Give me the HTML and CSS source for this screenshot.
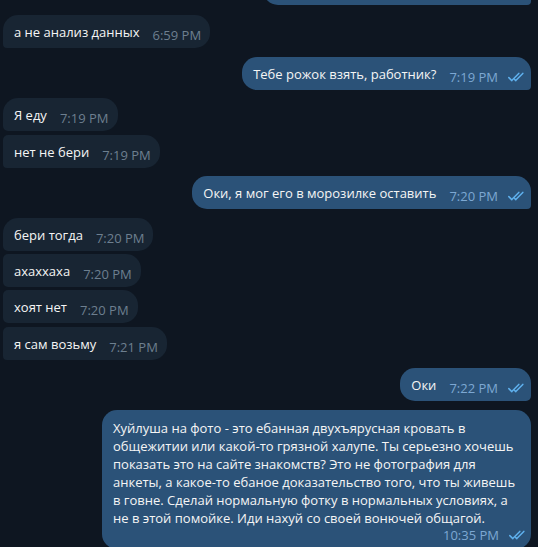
FILE: index.html
```html
<!DOCTYPE html>
<html lang="ru">
<head>
<meta charset="utf-8">
<link rel="stylesheet" href="styles.css">
</head>
<body>
<div class="chat">
  <div class="row out first"><div class="bubble out stub"></div></div>

  <div class="row in grp"><div class="bubble in"><span class="text">а не анализ данных</span><span class="meta">6:59 PM</span></div></div>

  <div class="row out grp"><div class="bubble out"><span class="text">Тебе рожок взять, работник?</span><span class="meta">7:19 PM<svg class="checks" viewBox="0 0 17 10"><path d="M0.8 5.6 L3.8 8.6 L10.8 1.4 M6.8 7.6 L7.8 8.6 L14.8 1.4"/></svg></span></div></div>

  <div class="row in grp"><div class="bubble in top"><span class="text">Я еду</span><span class="meta">7:19 PM</span></div></div>
  <div class="row in"><div class="bubble in bottom"><span class="text">нет не бери</span><span class="meta">7:19 PM</span></div></div>

  <div class="row out grp"><div class="bubble out"><span class="text">Оки, я мог его в морозилке оставить</span><span class="meta">7:20 PM<svg class="checks" viewBox="0 0 17 10"><path d="M0.8 5.6 L3.8 8.6 L10.8 1.4 M6.8 7.6 L7.8 8.6 L14.8 1.4"/></svg></span></div></div>

  <div class="row in grp"><div class="bubble in top"><span class="text">бери тогда</span><span class="meta">7:20 PM</span></div></div>
  <div class="row in"><div class="bubble in middle"><span class="text">ахаххаха</span><span class="meta">7:20 PM</span></div></div>
  <div class="row in"><div class="bubble in middle"><span class="text">хоят нет</span><span class="meta">7:20 PM</span></div></div>
  <div class="row in"><div class="bubble in bottom"><span class="text">я сам возьму</span><span class="meta">7:21 PM</span></div></div>

  <div class="row out grp"><div class="bubble out top"><span class="text">Оки</span><span class="meta">7:22 PM<svg class="checks" viewBox="0 0 17 10"><path d="M0.8 5.6 L3.8 8.6 L10.8 1.4 M6.8 7.6 L7.8 8.6 L14.8 1.4"/></svg></span></div></div>

  <div class="row out grp"><div class="bubble out long"><p class="text">Хуйлуша на фото - это ебанная двухъярусная кровать в общежитии или какой-то грязной халупе. Ты серьезно хочешь показать это на сайте знакомств? Это не фотография для анкеты, а какое-то ебаное доказательство того, что ты живешь в говне. Сделай нормальную фотку в нормальных условиях, а не в этой помойке. Иди нахуй со своей вонючей общагой.</p><div class="meta block">10:35 PM<svg class="checks" viewBox="0 0 17 10"><path d="M0.8 5.6 L3.8 8.6 L10.8 1.4 M6.8 7.6 L7.8 8.6 L14.8 1.4"/></svg></div></div></div>
</div>
</body>
</html>
```

FILE: styles.css
```css
html, body {
  margin: 0;
  padding: 0;
  background: #0e1621;
  height: 100%;
  overflow: hidden;
}

body {
  font-family: "Open Sans", "Liberation Sans", sans-serif;
  font-size: 13px;
  color: #f5f5f5;
}

.chat {
  display: flex;
  flex-direction: column;
}

.row {
  display: flex;
  margin-top: 3.25px;
}

.row.grp {
  margin-top: 8.7px;
}

.row.first {
  margin-top: -28px;
  margin-bottom: 1.3px;
}

.row.in {
  justify-content: flex-start;
  padding-left: 3px;
}

.row.out {
  justify-content: flex-end;
  padding-right: 7px;
}

.bubble {
  display: flex;
  align-items: flex-end;
  height: 33px;
  box-sizing: border-box;
  padding: 7px 9px 7px 11px;
  line-height: 18px;
  border-radius: 15px;
}

.bubble.stub {
  width: 268px;
}

.bubble.in {
  background: #182533;
  border-bottom-left-radius: 4px;
}

.bubble.in.top {
  border-bottom-left-radius: 5px;
}

.bubble.in.middle {
  border-top-left-radius: 5px;
  border-bottom-left-radius: 5px;
}

.bubble.in.bottom {
  border-top-left-radius: 5px;
  border-bottom-left-radius: 4px;
}

.bubble.out {
  background: #2b5278;
  border-bottom-right-radius: 4px;
  padding-right: 6px;
}

.bubble.out.top {
  border-bottom-right-radius: 5px;
}

.text {
  white-space: nowrap;
}

.meta {
  margin-left: 13px;
  font-size: 13px;
  line-height: 16px;
  white-space: nowrap;
  display: flex;
  align-items: center;
  position: relative;
  top: 2px;
}

.bubble.in .meta {
  color: #6d7f8f;
}

.bubble.out .meta {
  color: #7da8d3;
}

.checks {
  width: 17px;
  height: 10px;
  margin-left: 10px;
  fill: none;
  stroke: #5fb1ee;
  stroke-width: 1.5;
  stroke-linecap: round;
  stroke-linejoin: round;
}

.bubble.long {
  display: block;
  height: auto;
  width: 429px;
  padding: 9px 5px 6px 11px;
  border-radius: 15px;
}

.bubble.long .text {
  margin: 0;
  padding-right: 4px;
  white-space: normal;
  line-height: 18px;
}

.meta.block {
  justify-content: flex-end;
  margin-left: 0;
  top: 0;
}
```
